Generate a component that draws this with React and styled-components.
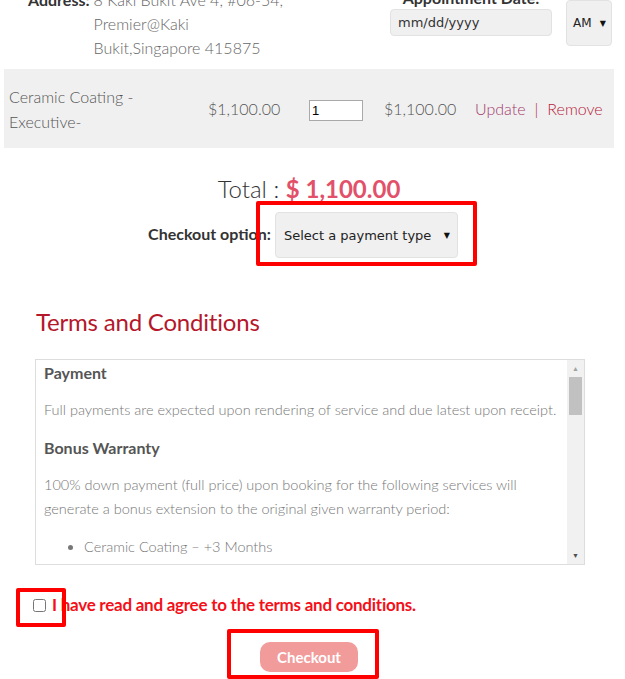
import React from "react";
import styled, { createGlobalStyle } from "styled-components";

const GlobalStyle = createGlobalStyle`
  body {
    margin: 0;
    background: #fff;
    font-family: Lato, "Open Sans", sans-serif;
    color: #555;
  }
`;

const Page = styled.div`
  width: 625px;
  margin-top: -12px;
  padding-bottom: 40px;
`;

const TopRow = styled.div`
  display: flex;
  justify-content: space-between;
  align-items: flex-start;
  padding: 0 13px 0 28px;
`;

const Address = styled.div`
  display: flex;
  font-size: 16px;
  line-height: 24px;
  font-weight: 300;
  color: #666;

  b {
    font-weight: 700;
    color: #333;
    margin-right: 4px;
  }
`;

const Appointment = styled.div`
  display: flex;
  align-items: flex-start;
  gap: 14px;
`;

const DateCol = styled.div`
  display: flex;
  flex-direction: column;
  align-items: center;
  gap: 1px;

  label {
    font-size: 16px;
    font-weight: 700;
    line-height: 20px;
    color: #333;
  }
`;

const DateInput = styled.input`
  box-sizing: border-box;
  width: 162px;
  height: 27px;
  padding: 0 7px;
  background: #f0f0f0;
  border: 1px solid #e2e2e2;
  border-radius: 4px;
  font: 13px "DejaVu Sans", Verdana, sans-serif;
  color: #333;
  outline: none;
`;

const FakeSelect = styled.div`
  box-sizing: border-box;
  display: flex;
  align-items: center;
  justify-content: space-between;
  height: ${(p) => p.h}px;
  width: ${(p) => p.w}px;
  margin-top: ${(p) => p.mt || 0}px;
  padding: 0 ${(p) => (p.small ? 5 : 7)}px 0 ${(p) => (p.small ? 6 : 8)}px;
  background: #f0f0f0;
  border: 1px solid #e2e2e2;
  border-radius: 4px;
  font: ${(p) => (p.small ? 12 : 13)}px "DejaVu Sans", Verdana, sans-serif;
  color: #222;

  span.caret {
    font-size: 8px;
    color: #111;
  }
`;

const CartRow = styled.div`
  display: grid;
  grid-template-columns: 199px 101px 75px 91px auto;
  align-items: center;
  width: 610px;
  height: 79px;
  box-sizing: border-box;
  margin: 9px 0 0 4px;
  padding-left: 5px;
  background: #f0f0f0;
  font-size: 16px;
  font-weight: 300;
  line-height: 25px;
  color: #555;
`;

const ItemName = styled.div`
  max-width: 135px;
`;

const QtyInput = styled.input`
  box-sizing: border-box;
  width: 54px;
  height: 21px;
  padding: 0 2px;
  border: 1px solid #a9a9a9;
  font: 13px Arial, "Liberation Sans", sans-serif;
  color: #000;
`;

const Actions = styled.div`
  display: flex;
  gap: 9px;
  white-space: nowrap;
`;

const ActionLink = styled.a`
  color: ${(p) => p.color};
  text-decoration: none;
`;

const Total = styled.div`
  margin-top: 26px;
  width: 618px;
  text-align: center;
  font-size: 24px;
  line-height: 30px;
  font-weight: 300;
  color: #333;

  strong {
    font-weight: 700;
    color: #e2506a;
  }
`;

const CheckoutOption = styled.div`
  display: flex;
  justify-content: center;
  align-items: center;
  width: 606px;
  margin-top: 8px;

  label {
    font-size: 16px;
    font-weight: 700;
    color: #333;
    margin-right: 4px;
    margin-top: -3px;
  }
`;

const Marked = styled.div`
  position: relative;
  display: inline-flex;
`;

const Mark = styled.span`
  position: absolute;
  top: -${(p) => p.t}px;
  right: -${(p) => p.r}px;
  bottom: -${(p) => p.b}px;
  left: -${(p) => p.l}px;
  border: 4px solid #ff0000;
  border-radius: 2px;
  pointer-events: none;
`;

const TermsTitle = styled.h2`
  margin: 49px 0 0 36px;
  font-size: 24px;
  line-height: 30px;
  font-weight: 400;
  letter-spacing: -0.2px;
  color: #b5172b;
`;

const TermsBox = styled.div`
  box-sizing: border-box;
  display: flex;
  width: 550px;
  height: 206px;
  margin: 22px 0 0 35px;
  border: 1px solid #ddd;
`;

const TermsContent = styled.div`
  flex: 1;
  overflow: hidden;
  padding: 0 8px;
  font-size: 14.5px;
  line-height: 24px;
  font-weight: 300;
  color: #777;

  h4 {
    margin: 1px 0 0;
    font-size: 16px;
    font-weight: 700;
    color: #555;
  }
  p {
    margin: 13px 0 14px;
  }
  ul {
    margin: 0;
    padding-left: 40px;
  }
`;

const ScrollTrack = styled.div`
  display: flex;
  flex-direction: column;
  align-items: center;
  width: 17px;
  background: #f1f1f1;
`;

const ScrollArrow = styled.div`
  height: 17px;
  line-height: 17px;
  font-size: 7px;
  color: ${(p) => (p.dim ? "#a3a3a3" : "#505050")};
  margin-top: ${(p) => (p.end ? "auto" : 0)};
`;

const ScrollThumb = styled.div`
  width: 13px;
  height: 38px;
  background: #c1c1c1;
`;

const AgreeRow = styled.div`
  display: flex;
  align-items: center;
  margin: 28px 0 0 33px;
  line-height: 24px;
`;

const CheckBox = styled.input`
  width: 13px;
  height: 13px;
  margin: 0;
`;

const AgreeText = styled.label`
  margin-left: 6px;
  font-size: 17px;
  font-weight: 700;
  color: #f51019;
  letter-spacing: -0.25px;
`;

const ButtonRow = styled.div`
  display: flex;
  justify-content: center;
  width: 618px;
  margin-top: 25px;
`;

const CheckoutButton = styled.button`
  width: 98px;
  height: 30px;
  border: none;
  border-radius: 10px;
  background: #f29b9b;
  color: #fff;
  font-family: Lato, sans-serif;
  font-size: 15px;
  font-weight: 700;
`;

export default function App() {
  return (
    <Page>
      <GlobalStyle />
      <TopRow>
        <Address>
          <b>Address:</b>
          <div>
            8 Kaki Bukit Ave 4, #06-54,
            <br />
            Premier@Kaki
            <br />
            Bukit,Singapore 415875
          </div>
        </Address>
        <Appointment>
          <DateCol>
            <label>Appointment Date:</label>
            <DateInput readOnly value="mm/dd/yyyy" />
          </DateCol>
          <FakeSelect w={46} h={46} mt={12} small>
            AM <span className="caret">▼</span>
          </FakeSelect>
        </Appointment>
      </TopRow>

      <CartRow>
        <ItemName>Ceramic Coating - Executive-</ItemName>
        <div>$1,100.00</div>
        <div>
          <QtyInput readOnly value="1" />
        </div>
        <div>$1,100.00</div>
        <Actions>
          <ActionLink color="#a23a6c">Update</ActionLink>
          <ActionLink color="#b01e3a">|</ActionLink>
          <ActionLink color="#b8203a">Remove</ActionLink>
        </Actions>
      </CartRow>

      <Total>
        Total : <strong>$ 1,100.00</strong>
      </Total>

      <CheckoutOption>
        <label>Checkout option:</label>
        <Marked>
          <FakeSelect w={183} h={46}>
            Select a payment type <span className="caret">▼</span>
          </FakeSelect>
          <Mark t={11} r={19} b={8} l={19} />
        </Marked>
      </CheckoutOption>

      <TermsTitle>Terms and Conditions</TermsTitle>
      <TermsBox>
        <TermsContent>
          <h4>Payment</h4>
          <p>Full payments are expected upon rendering of service and due latest upon receipt.</p>
          <h4>Bonus Warranty</h4>
          <p>
            100% down payment (full price) upon booking for the following services will generate a
            bonus extension to the original given warranty period:
          </p>
          <ul>
            <li>Ceramic Coating – +3 Months</li>
            <li>Paint Protection Film – +3 Months</li>
          </ul>
        </TermsContent>
        <ScrollTrack>
          <ScrollArrow dim>▲</ScrollArrow>
          <ScrollThumb />
          <ScrollArrow end>▼</ScrollArrow>
        </ScrollTrack>
      </TermsBox>

      <AgreeRow>
        <Marked>
          <CheckBox type="checkbox" id="agree" />
          <Mark t={11} r={20} b={15} l={17} />
        </Marked>
        <AgreeText htmlFor="agree">I have read and agree to the terms and conditions.</AgreeText>
      </AgreeRow>

      <ButtonRow>
        <Marked>
          <CheckoutButton>Checkout</CheckoutButton>
          <Mark t={13} r={21} b={7} l={33} />
        </Marked>
      </ButtonRow>
    </Page>
  );
}
